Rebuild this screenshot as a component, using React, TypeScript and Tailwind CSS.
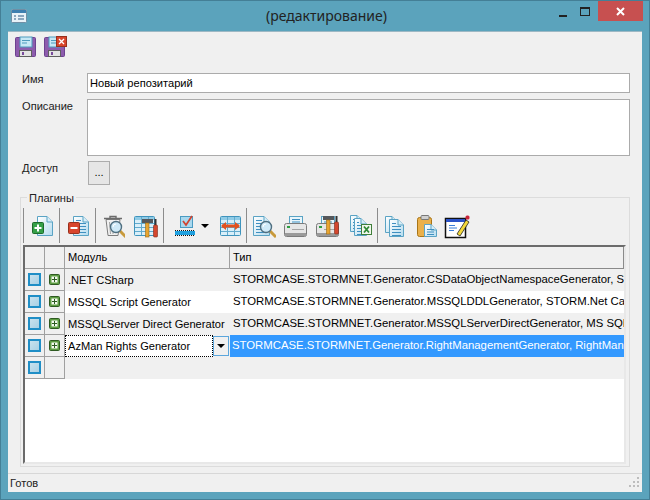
import React from "react";

const FONT = "font-['Liberation_Sans',Arial,sans-serif]";

function Doc({ x = 6, y = 2, w = 16, h = 20, lines = false }: { x?: number; y?: number; w?: number; h?: number; lines?: boolean }) {
    const id = `d${x}${y}${w}${h}`;
    return (
        <g>
            <defs>
                <linearGradient id={id} x1="0" y1="0" x2="1" y2="1">
                    <stop offset="0" stopColor="#ffffff" />
                    <stop offset="1" stopColor="#b5dcef" />
                </linearGradient>
            </defs>
            <path d={`M${x + 0.5} ${y + 0.5}H${x + w - 6}L${x + w - 0.5} ${y + 6}V${y + h - 0.5}H${x + 0.5}Z`} fill={`url(#${id})`} stroke="#5aa3c4" />
            <path d={`M${x + w - 6} ${y + 0.5}V${y + 6}H${x + w - 0.5}`} fill="#d8eef8" stroke="#5aa3c4" />
            {lines && (
                <path
                    d={`M${x + 3} ${y + 4.5}H${x + w - 8}M${x + 3} ${y + 7.5}H${x + w - 3}M${x + 3} ${y + 10.5}H${x + w - 3}M${x + 3} ${y + 13.5}H${x + w - 3}M${x + 3} ${y + 16.5}H${x + w - 3}`}
                    stroke="#3f8fc0"
                />
            )}
        </g>
    );
}

function Loupe({ x, y }: { x: number; y: number }) {
    return (
        <g>
            <path d={`M${x + 4} ${y + 4}L${x + 10} ${y + 10}`} stroke="#c89a3c" strokeWidth="3" />
            <circle cx={x} cy={y} r="5.5" fill="#cfeaf8" stroke="#4f6f80" strokeWidth="1.4" />
            <path d={`M${x - 3} ${y}A3 3 0 0 1 ${x} ${y - 3}`} stroke="#fff" fill="none" />
        </g>
    );
}

function Hammer({ x, y }: { x: number; y: number }) {
    return (
        <g>
            <rect x={x} y={y} width="11" height="4" fill="#55585c" />
            <rect x={x + 3.5} y={y + 4} width="3.5" height="14" fill="#e8a530" stroke="#9c6a14" strokeWidth="0.6" />
            <path d={`M${x + 13.5} ${y}V${y + 6}`} stroke="#333" strokeWidth="2" />
            <rect x={x + 11.5} y={y + 6} width="4" height="12" rx="1" fill="#d4472e" stroke="#7d2a1a" strokeWidth="0.6" />
        </g>
    );
}

function Table({ x, y, w = 21, h = 20 }: { x: number; y: number; w?: number; h?: number }) {
    return (
        <g>
            <rect x={x + 0.5} y={y + 0.5} width={w - 1} height={h - 1} rx="1" fill="#d9eff9" stroke="#3f94bd" />
            <rect x={x + 1} y={y + 1} width={w - 2} height="3" fill="#8fcbe6" />
            <path d={`M${x + 1} ${y + 7.5}H${x + w - 1}M${x + 1} ${y + 11.5}H${x + w - 1}M${x + 1} ${y + 15.5}H${x + w - 1}M${x + 7.5} ${y + 1}V${y + h - 1}M${x + 14.5} ${y + 1}V${y + h - 1}`} stroke="#62aacd" />
        </g>
    );
}

function Printer({ x = 0, y = 0 }: { x?: number; y?: number }) {
    return (
        <g transform={`translate(${x} ${y})`}>
            <rect x="5.5" y="0.5" width="13" height="11" fill="#e8f5fb" stroke="#5aa3c4" />
            <path d="M8 3.5H16M8 6H16" stroke="#3f8fc0" />
            <rect x="0.5" y="7.5" width="22" height="13" rx="2" fill="#e6e6e6" stroke="#7b7b7b" />
            <rect x="1" y="17" width="21" height="3" fill="#9a9a9a" />
            <rect x="3" y="10" width="3" height="2" fill="#2f9e41" />
            <path d="M8 13.5H20" stroke="#a5a5a5" />
        </g>
    );
}

function Floppy({ x, y }: { x: number; y: number }) {
    return (
        <g transform={`translate(${x} ${y})`}>
            <rect x="0.5" y="0.5" width="20" height="19" rx="1" fill="#8d5cad" stroke="#6d4290" />
            <rect x="5" y="0" width="12" height="10" fill="#c6e8f5" stroke="#4f9bbd" />
            <path d="M7 3.5H15M7 6H12" stroke="#4f9bbd" />
            <rect x="4.5" y="13.5" width="12" height="6" fill="#e4e4e4" stroke="#5f5f5f" />
            <rect x="7" y="15" width="2" height="3" fill="#7a4b9d" />
        </g>
    );
}

const Svg = ({ w = 24, h = 24, children }: { w?: number; h?: number; children: React.ReactNode }) => (
    <svg width={w} height={h} viewBox={`0 0 ${w} ${h}`} className="block shrink-0">
        {children}
    </svg>
);

const icons = {
    add: (
        <Svg>
            <Doc x={7} y={2} w={16} h={20} />
            <rect x="2.5" y="8.5" width="11" height="11" rx="1" fill="#35a048" stroke="#1d6a2b" />
            <path d="M8 10.5V17.5M4.5 14H11.5" stroke="#fff" strokeWidth="2" />
        </Svg>
    ),
    remove: (
        <Svg>
            <Doc x={7} y={2} w={16} h={20} lines />
            <rect x="2.5" y="8.5" width="11" height="11" rx="1" fill="#d8452c" stroke="#97301d" />
            <path d="M4.5 14H11.5" stroke="#fff" strokeWidth="2" />
        </Svg>
    ),
    trash: (
        <Svg>
            <path d="M5 5.5L7 21.5H17L19 5.5Z" fill="#f0f0f0" stroke="#7d7d7d" />
            <path d="M3 4.5H21M9 4V2.5H15V4" stroke="#6b6b6b" strokeWidth="1.4" fill="none" />
            <path d="M8.5 8L9.5 20M12 8V20" stroke="#a5a5a5" />
            <Loupe x={15} y={13} />
        </Svg>
    ),
    tableTools: (
        <Svg>
            <Table x={0} y={2} w={21} h={20} />
            <Hammer x={8} y={5} />
        </Svg>
    ),
    checkLine: (
        <Svg w={22} h={24}>
            <rect x="6.5" y="2.5" width="12" height="11" fill="#a9d8ee" stroke="#4a9bc2" />
            <path d="M9 7L12 11L18 2" stroke="#d1432f" strokeWidth="1.7" fill="none" />
            <rect x="1" y="17" width="20" height="4" fill="#1fa0df" />
            <path d="M1 16.5H21M1 21.5H21" stroke="#111" strokeDasharray="1 1" />
        </Svg>
    ),
    tableArrows: (
        <Svg w={22} h={24}>
            <Table x={1} y={2} w={21} h={20} />
            <path d="M3 12H20" stroke="#e2511f" strokeWidth="3" />
            <path d="M7 8L2 12L7 16ZM16 8L21 12L16 16Z" fill="#e2511f" />
        </Svg>
    ),
    preview: (
        <Svg>
            <Doc x={1} y={2} w={17} h={20} lines />
            <Loupe x={14} y={13} />
        </Svg>
    ),
    printer: (
        <Svg>
            <Printer y={2} />
        </Svg>
    ),
    printerTools: (
        <Svg>
            <Printer y={2} />
            <Hammer x={7} y={2} />
        </Svg>
    ),
    excel: (
        <Svg>
            <Doc x={1} y={1} w={13} h={17} lines />
            <Doc x={5} y={4} w={13} h={18} lines />
            <rect x="12.5" y="10.5" width="10" height="10" fill="#f2f7ee" stroke="#3f7f3a" />
            <path d="M15 12.5L20 18.5M20 12.5L15 18.5" stroke="#2f8a35" strokeWidth="1.8" />
        </Svg>
    ),
    copy: (
        <Svg w={22} h={24}>
            <Doc x={1} y={2} w={13} h={17} />
            <Doc x={5} y={5} w={15} h={18} lines />
        </Svg>
    ),
    paste: (
        <Svg w={22} h={24}>
            <rect x="1.5" y="3.5" width="14" height="19" rx="2" fill="#eab04a" stroke="#a87518" />
            <rect x="5" y="1.5" width="8" height="4" rx="1" fill="#cfcfcf" stroke="#777" />
            <Doc x={8} y={10} w={13} h={13} />
            <path d="M11 15.5H18M11 18H18M11 20.5H18" stroke="#3f8fc0" />
        </Svg>
    ),
    edit: (
        <Svg w={26} h={26}>
            <rect x="1.5" y="5.5" width="20" height="19" fill="#fff" stroke="#111" strokeWidth="1.5" />
            <rect x="2" y="6" width="19" height="3" fill="#2a52c8" />
            <path d="M5 12.5H11M5 15H13M5 17.5H10" stroke="#3a7fd8" />
            <path d="M13 21L22 7L25 9L16 23Z" fill="#f3d83a" stroke="#222" strokeWidth="0.8" />
            <rect x="21.5" y="2.5" width="4" height="4" rx="1.5" fill="#c8243a" />
        </Svg>
    ),
};

function Sep() {
    return <div className="w-px h-[35px] bg-[#8c8c8c] shrink-0" />;
}

function Slot({ w, children }: { w: string; children: React.ReactNode }) {
    return <div className={`${w} h-[35px] flex items-center justify-center shrink-0`}>{children}</div>;
}

function CheckIcon() {
    return <div className="w-[13px] h-[13px] border-2 border-[#1f8ec6] bg-gradient-to-br from-[#c9e2ee] to-[#a8d0e4]" />;
}

function PlusIcon() {
    return (
        <svg width="11" height="11" viewBox="0 0 11 11" className="block">
            <rect x="0.5" y="0.5" width="10" height="10" rx="1" fill="#5d9c42" stroke="#2e5a22" />
            <rect x="2.5" y="2.5" width="6" height="6" fill="#f4faef" />
            <path d="M5.5 3V8M3 5.5H8" stroke="#2b5a20" />
        </svg>
    );
}

function DownArrow() {
    return <div className="w-0 h-0 border-x-[4px] border-x-transparent border-t-[4px] border-t-black" />;
}

function GridRow({ module, type, bg, active }: { module?: string; type?: string; bg: string; active?: boolean }) {
    return (
        <div className={`flex h-[22px] shrink-0 ${bg}`}>
            <div className="w-5 shrink-0 flex items-center justify-center border-r border-b border-[#a0a0a0] bg-[#f0f0f0]">
                <CheckIcon />
            </div>
            <div className="w-5 shrink-0 flex items-center justify-center border-r border-b border-[#a0a0a0] bg-[#f0f0f0]">
                {module && <PlusIcon />}
            </div>
            {active ? (
                <>
                    <div className="w-[148px] shrink-0 flex items-center pl-[2px] bg-white border border-dotted border-black whitespace-nowrap">{module}</div>
                    <div className="w-[17px] shrink-0 flex items-center justify-center bg-[#f0f0f0] py-[1px] pr-[1px]">
                        <div className="w-full h-full border border-[#5ba6dc] flex items-center justify-center">
                            <DownArrow />
                        </div>
                    </div>
                    <div className="flex-1 min-w-0 flex items-center pl-[2px] bg-[#3399ff] text-white text-[11.35px] whitespace-nowrap overflow-hidden">{type}</div>
                </>
            ) : (
                <>
                    <div className="w-[165px] shrink-0 flex items-center pl-[3px] whitespace-nowrap overflow-hidden">{module}</div>
                    <div className="flex-1 min-w-0 flex items-center pl-[3px] text-[11.35px] whitespace-nowrap overflow-hidden">{type}</div>
                </>
            )}
        </div>
    );
}

export default function App() {
    return (
        <div className={`w-[650px] h-[500px] flex flex-col bg-[#5ba3bc] border border-[#447f96] text-[11.1px] text-black overflow-hidden ${FONT}`}>
            <div className="h-[30px] shrink-0 flex">
                <div className="ml-[10px] mt-[8px]">
                    <svg width="16" height="14" viewBox="0 0 16 14" className="block">
                        <rect x="0.5" y="0.5" width="15" height="13" rx="1" fill="#e8f2f8" stroke="#6f8fa5" />
                        <rect x="1" y="1" width="14" height="3" fill="#3d7fb0" />
                        <path d="M3 7H5M7 7H13M3 10H5M7 10H13" stroke="#2f5d85" />
                    </svg>
                </div>
                <div className="flex-1 text-center pt-[5px] pl-[72px] text-[14px] leading-5 text-[#222] font-['Noto_Sans',sans-serif]">(редактирование)</div>
                <div className="flex items-start shrink-0 mr-[6px]">
                    <div className="w-[18px] h-[21px] mr-[8px] flex items-end pb-[5px] justify-center">
                        <div className="w-[8px] h-[2px] bg-[#222]" />
                    </div>
                    <div className="w-[10px] h-[9px] mt-[6px] mr-[8px] border border-[#222] border-t-2" />
                    <div className="w-[45px] h-[20px] bg-[#c75050] flex items-center justify-center">
                        <svg width="9" height="9" viewBox="0 0 9 9" className="block">
                            <path d="M1 1L8 8M8 1L1 8" stroke="#fff" strokeWidth="2" />
                        </svg>
                    </div>
                </div>
            </div>

            <div className="mx-[7px] mb-[7px] flex-1 min-h-0 flex flex-col bg-[#f0f0f0] border-t border-[#9db8c4]">
                <div className="flex h-[30px] shrink-0 items-start pl-[7px] gap-[8px] pt-[4px]">
                    <Svg w={21} h={22}>
                        <Floppy x={0} y={1} />
                    </Svg>
                    <Svg w={23} h={22}>
                        <Floppy x={0} y={1} />
                        <rect x="12.5" y="0.5" width="10" height="10" fill="#d8452c" stroke="#97301d" />
                        <path d="M15 3L20 8M20 3L15 8" stroke="#fff" strokeWidth="1.3" />
                    </Svg>
                </div>

                <div className="flex flex-col pl-[14px] pr-[12px] pt-[11px]">
                    <div className="flex h-[20px]">
                        <div className="w-[65px] leading-[12px] text-[#222]">Имя</div>
                        <div className="flex-1 bg-white border border-[#ababab] flex items-center pl-[2px]">Новый репозитарий</div>
                    </div>
                    <div className="flex h-[57px] mt-[6px]">
                        <div className="w-[65px] pt-[1px] leading-[12px] text-[#222]">Описание</div>
                        <div className="flex-1 bg-white border border-[#ababab]" />
                    </div>
                    <div className="flex h-[24px] mt-[5px] items-start">
                        <div className="w-[66px] pt-[1px] leading-[12px] text-[#222]">Доступ</div>
                        <div className="w-[22px] h-[24px] bg-[#e6e6e6] border border-[#acacac] flex items-center justify-center pb-[2px]">...</div>
                    </div>
                </div>

                <div className="relative mt-[12px] mx-[12px] h-[270px] shrink-0 border border-[#dcdcdc] pl-[2px] pr-[3px] pt-[10px]">
                    <div className="absolute left-[6px] top-[-7px] bg-[#f0f0f0] px-[2px] leading-[14px] text-[#222]">Плагины</div>
                    <div className="flex items-center h-[35px]">
                        <Sep />
                        <Slot w="w-[35px]">{icons.add}</Slot>
                        <Sep />
                        <Slot w="w-[35px]">{icons.remove}</Slot>
                        <Sep />
                        <Slot w="w-[33px]">{icons.trash}</Slot>
                        <Slot w="w-[34px]">{icons.tableTools}</Slot>
                        <Sep />
                        <Slot w="w-[49px]">
                            <div className="flex items-center gap-[5px] ml-[6px]">
                                {icons.checkLine}
                                <DownArrow />
                            </div>
                        </Slot>
                        <Slot w="w-[33px]">{icons.tableArrows}</Slot>
                        <Sep />
                        <Slot w="w-[33px]">{icons.preview}</Slot>
                        <Slot w="w-[32px]">{icons.printer}</Slot>
                        <Slot w="w-[32px]">{icons.printerTools}</Slot>
                        <Slot w="w-[33px]">{icons.excel}</Slot>
                        <Sep />
                        <Slot w="w-[33px]">{icons.copy}</Slot>
                        <Slot w="w-[32px]">{icons.paste}</Slot>
                        <Slot w="w-[28px]">{icons.edit}</Slot>
                    </div>

                    <div className="mt-[2px] h-[219px] flex flex-col bg-white border-2 border-[#6b6b6b] border-r-[#e8e8e8] border-b-[#e8e8e8] overflow-hidden">
                        <div className="flex h-[22px] shrink-0 bg-[#f0f0f0] border-r border-[#8a8a8a]">
                            <div className="w-5 shrink-0 border-r border-b border-[#a0a0a0]" />
                            <div className="w-5 shrink-0 border-r border-b border-[#a0a0a0]" />
                            <div className="w-[165px] shrink-0 flex items-center pl-[3px] border-r border-b border-[#a0a0a0]">Модуль</div>
                            <div className="flex-1 flex items-center pl-[3px] border-b border-[#8a8a8a]">Тип</div>
                        </div>
                        <GridRow bg="bg-[#f0f0f0]" module=".NET CSharp" type="STORMCASE.STORMNET.Generator.CSDataObjectNamespaceGenerator, STORM.Net Case" />
                        <GridRow bg="bg-white" module="MSSQL Script Generator" type="STORMCASE.STORMNET.Generator.MSSQLDDLGenerator, STORM.Net Case Tool" />
                        <GridRow bg="bg-[#f0f0f0]" module="MSSQLServer Direct Generator" type="STORMCASE.STORMNET.Generator.MSSQLServerDirectGenerator, MS SQL Server" />
                        <GridRow active bg="bg-white" module="AzMan Rights Generator" type="STORMCASE.STORMNET.Generator.RightManagementGenerator, RightManagement" />
                        <GridRow bg="bg-[#f0f0f0]" />
                    </div>
                </div>

                <div className="mt-auto h-[19px] shrink-0 border-t border-[#d7d7d7] flex items-center pl-[2px] justify-between">
                    <span className="text-[#222]">Готов</span>
                    <svg width="12" height="12" viewBox="0 0 12 12" className="block mr-[1px]">
                        <path d="M8 0h2v2H8zM4 4h2v2H4zM8 4h2v2H8zM0 8h2v2H0zM4 8h2v2H4zM8 8h2v2H8z" fill="#bdbdbd" />
                    </svg>
                </div>
            </div>
        </div>
    );
}
